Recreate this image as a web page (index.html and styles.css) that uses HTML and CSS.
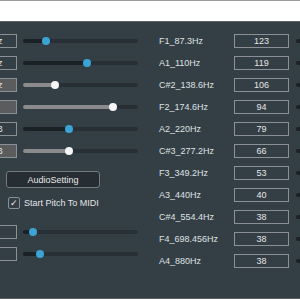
FILE: index.html
```html
<!DOCTYPE html>
<html lang="en">
<head>
    <meta charset="UTF-8">
    <title>Pitch To MIDI</title>
    <link rel="stylesheet" href="styles.css">
</head>
<body>
    <div class="topbar"></div>
    <div class="panel">
        <div class="left-col">
            <div class="row"><div class="box">1000Hz</div><div class="track"><div class="fill" style="width:23px"><span class="thumb"></span></div></div></div>
            <div class="row"><div class="box">1000Hz</div><div class="track"><div class="fill" style="width:64px"><span class="thumb"></span></div></div></div>
            <div class="row"><div class="box filled">1000Hz</div><div class="track"><div class="fill light" style="width:32px"><span class="thumb white"></span></div></div></div>
            <div class="row"><div class="box filled"></div><div class="track"><div class="fill light" style="width:90px"><span class="thumb white"></span></div></div></div>
            <div class="row"><div class="box">-12.0dB</div><div class="track"><div class="fill" style="width:46px"><span class="thumb"></span></div></div></div>
            <div class="row"><div class="box filled">-12.0dB</div><div class="track"><div class="fill light" style="width:46px"><span class="thumb white"></span></div></div></div>

            <button class="audio-btn">AudioSetting</button>

            <label class="check-row">
                <span class="checkbox">&#10003;</span>
                Start Pitch To MIDI
            </label>

            <div class="row row-gap"><div class="box"></div><div class="track"><div class="fill" style="width:10px"><span class="thumb"></span></div></div></div>
            <div class="row"><div class="box"></div><div class="track"><div class="fill" style="width:17px"><span class="thumb"></span></div></div></div>
        </div>

        <div class="right-col">
            <div class="note-row"><span class="note">F1_87.3Hz</span><div class="value">123</div><div class="mini-track"></div></div>
            <div class="note-row"><span class="note">A1_110Hz</span><div class="value">119</div><div class="mini-track"></div></div>
            <div class="note-row"><span class="note">C#2_138.6Hz</span><div class="value">106</div><div class="mini-track"></div></div>
            <div class="note-row"><span class="note">F2_174.6Hz</span><div class="value">94</div><div class="mini-track"></div></div>
            <div class="note-row"><span class="note">A2_220Hz</span><div class="value">79</div><div class="mini-track"></div></div>
            <div class="note-row"><span class="note">C#3_277.2Hz</span><div class="value">66</div><div class="mini-track"></div></div>
            <div class="note-row"><span class="note">F3_349.2Hz</span><div class="value">53</div><div class="mini-track"></div></div>
            <div class="note-row"><span class="note">A3_440Hz</span><div class="value">40</div><div class="mini-track"></div></div>
            <div class="note-row"><span class="note">C#4_554.4Hz</span><div class="value">38</div><div class="mini-track"></div></div>
            <div class="note-row"><span class="note">F4_698.456Hz</span><div class="value">38</div><div class="mini-track"></div></div>
            <div class="note-row"><span class="note">A4_880Hz</span><div class="value">38</div><div class="mini-track"></div></div>
        </div>
    </div>
</body>
</html>
```

FILE: styles.css
```css
/* Pitch To MIDI panel */
body {
    margin: 0;
    background-color: #ffffff;
    font-family: "Liberation Sans", Arial, sans-serif;
    font-size: 9px;
    color: #dfe2e4;
    overflow: hidden;
}

.topbar {
    height: 20px;
    border-top: 1px solid #9c9c9c;
    background-color: #ffffff;
}

.panel {
    display: flex;
    height: 278px;
    box-sizing: border-box;
    background-color: #343e45;
    border-top: 1px solid #5c656b;
    border-bottom: 1px solid #586167;
}

/* left column: sliders */
.left-col {
    width: 159px;
    flex-shrink: 0;
    padding-top: 8px;
    display: flex;
    flex-direction: column;
}

.row {
    height: 22px;
    display: flex;
    align-items: center;
    gap: 6px;
}

.row-gap {
    margin-top: 12px;
}

.box {
    width: 60px;
    height: 14px;
    margin-left: -43px;
    box-sizing: border-box;
    border: 1px solid #8a9095;
    line-height: 12px;
    text-align: center;
    color: #e6e6e6;
    flex-shrink: 0;
}

.box.filled {
    background-color: #5b5c5d;
}

.track {
    width: 115px;
    height: 4px;
    border-radius: 2px;
    background-color: #283035;
}

.fill {
    position: relative;
    height: 100%;
    border-radius: 2px;
    background-color: #1b2125;
}

.fill.light {
    background-color: #8b8b8b;
}

.thumb {
    position: absolute;
    right: -4px;
    top: -2px;
    width: 8px;
    height: 8px;
    border-radius: 50%;
    background-color: #3ba4d6;
}

.thumb.white {
    background-color: #f5f5f5;
}

.audio-btn {
    margin: 9px 0 0 6px;
    width: 94px;
    height: 17px;
    padding: 0;
    border: 1px solid #737b80;
    border-radius: 3px;
    background-color: #262e33;
    color: #e8e8e8;
    font-family: "Liberation Sans", Arial, sans-serif;
    font-size: 9px;
}

.check-row {
    margin: 9px 0 0 8px;
    display: flex;
    align-items: center;
    gap: 4px;
    height: 12px;
    color: #e2e4e6;
}

.checkbox {
    width: 12px;
    height: 12px;
    box-sizing: border-box;
    border: 1px solid #8a9095;
    border-radius: 2px;
    font-size: 9px;
    line-height: 10px;
    text-align: center;
    color: #f0f0f0;
}

/* right column: note thresholds */
.right-col {
    padding-top: 8px;
    display: flex;
    flex-direction: column;
}

.note-row {
    height: 22px;
    display: flex;
    align-items: center;
}

.note {
    width: 75px;
}

.value {
    width: 55px;
    height: 14px;
    box-sizing: border-box;
    border: 1px solid #8a9095;
    line-height: 12px;
    text-align: center;
    color: #e6e6e6;
}

.mini-track {
    margin-left: 7px;
    width: 20px;
    height: 4px;
    border-radius: 2px;
    background-color: #1b2125;
    flex-shrink: 0;
}
```
